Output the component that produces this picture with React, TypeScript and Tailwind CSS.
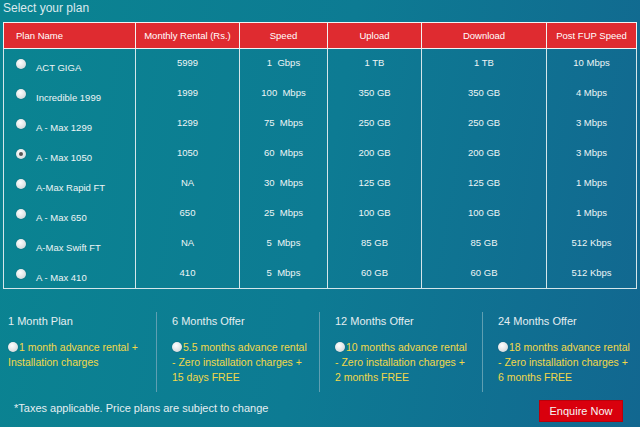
import React from 'react';

const plans = [
  { name: 'ACT GIGA', rent: '5999', speed: '1  Gbps', up: '1 TB', down: '1 TB', fup: '10 Mbps' },
  { name: 'Incredible 1999', rent: '1999', speed: '100  Mbps', up: '350 GB', down: '350 GB', fup: '4 Mbps' },
  { name: 'A - Max 1299', rent: '1299', speed: '75  Mbps', up: '250 GB', down: '250 GB', fup: '3 Mbps' },
  { name: 'A - Max 1050', rent: '1050', speed: '60  Mbps', up: '200 GB', down: '200 GB', fup: '3 Mbps' },
  { name: 'A-Max Rapid FT', rent: 'NA', speed: '30  Mbps', up: '125 GB', down: '125 GB', fup: '1 Mbps' },
  { name: 'A - Max 650', rent: '650', speed: '25  Mbps', up: '100 GB', down: '100 GB', fup: '1 Mbps' },
  { name: 'A-Max Swift FT', rent: 'NA', speed: '5  Mbps', up: '85 GB', down: '85 GB', fup: '512 Kbps' },
  { name: 'A - Max 410', rent: '410', speed: '5  Mbps', up: '60 GB', down: '60 GB', fup: '512 Kbps' },
];

const offers = [
  { title: '1 Month Plan', text: '1 month advance rental + Installation charges' },
  { title: '6 Months Offer', text: '5.5 months advance rental - Zero installation charges + 15 days FREE' },
  { title: '12 Months Offer', text: '10 months advance rental - Zero installation charges + 2 months FREE' },
  { title: '24 Months Offer', text: '18 months advance rental - Zero installation charges + 6 months FREE' },
];

function Radio({ checked }: { checked?: boolean }) {
  return (
    <span className="inline-flex h-[10px] w-[10px] shrink-0 items-center justify-center rounded-full bg-[radial-gradient(circle_at_40%_35%,#ffffff,#c9cfd2)] shadow-[0_0_1px_rgba(0,0,0,0.4)]">
      {checked && <span className="h-[4px] w-[4px] rounded-full bg-[#555]" />}
    </span>
  );
}

export default function App() {
  const [selected, setSelected] = React.useState(3);

  return (
    <div className="h-[427px] w-[640px] overflow-hidden bg-[linear-gradient(100deg,#0a8491_0%,#0d7b93_50%,#126790_100%)] font-['Liberation_Sans',sans-serif] text-[#eef5f6]">
      <div className="px-[3px] text-[12px] leading-[16px] text-[#dbeaee]">Select your plan</div>

      <table className="ml-[3px] mt-[6px] w-[633px] table-fixed border-collapse border border-[#d5e6ea] text-[9.5px] leading-[11px]">
        <colgroup>
          <col className="w-[132px]" />
          <col className="w-[104px]" />
          <col className="w-[88px]" />
          <col className="w-[94px]" />
          <col className="w-[125px]" />
          <col className="w-[90px]" />
        </colgroup>
        <thead>
          <tr className="h-[26px] bg-[#df2b30] text-white">
            <th className="border border-[#f2f2f2] pl-[12px] text-left font-normal">Plan Name</th>
            <th className="border border-[#f2f2f2] font-normal">Monthly Rental (Rs.)</th>
            <th className="border border-[#f2f2f2] font-normal">Speed</th>
            <th className="border border-[#f2f2f2] font-normal">Upload</th>
            <th className="border border-[#f2f2f2] font-normal">Download</th>
            <th className="border border-[#f2f2f2] font-normal">Post FUP Speed</th>
          </tr>
        </thead>
        <tbody>
          {plans.map((p, i) => (
            <tr key={p.name} className="h-[30px]">
              <td className="h-[30px] border-x border-[#d5e6ea] p-0 pl-[12px] align-top">
                <label className="flex cursor-pointer items-start gap-[10px] pt-[10px]" onClick={() => setSelected(i)}>
                  <Radio checked={selected === i} />
                  <span className="mt-[3px]">{p.name}</span>
                </label>
              </td>
              <td className="border-x border-[#d5e6ea] p-0 pt-[8px] text-center align-top">{p.rent}</td>
              <td className="whitespace-pre border-x border-[#d5e6ea] p-0 pt-[8px] text-center align-top">{p.speed}</td>
              <td className="border-x border-[#d5e6ea] p-0 pt-[8px] text-center align-top">{p.up}</td>
              <td className="border-x border-[#d5e6ea] p-0 pt-[8px] text-center align-top">{p.down}</td>
              <td className="border-x border-[#d5e6ea] p-0 pt-[8px] text-center align-top">{p.fup}</td>
            </tr>
          ))}
        </tbody>
      </table>

      <div className="mt-[23px] grid grid-cols-[156px_163px_163px_158px]">
        {offers.map((o, i) => (
          <div
            key={o.title}
            className={
              i === 0
                ? 'h-[80px] pl-[8px]'
                : 'h-[80px] border-l border-[#5f9fb2] pl-[15px]'
            }
          >
            <div className="pt-[2px] text-[11px] leading-[14px] text-[#e4eef1]">{o.title}</div>
            <div className="mt-[12px] max-w-[136px] text-[10.5px] leading-[15px] text-[#f2d84a]">
              <span className="mr-[1px] inline-block translate-y-[1px]">
                <Radio />
              </span>
              {o.text}
            </div>
          </div>
        ))}
      </div>

      <div className="mt-[6px] flex items-start justify-between pl-[14px] pr-[17px]">
        <span className="pt-[4px] text-[11px] leading-[13px] text-[#e4eef1]">
          *Taxes applicable. Price plans are subject to change
        </span>
        <button className="mt-[2px] h-[22px] w-[84px] border border-[#b9000a] bg-[#d9000d] text-[11px] text-[#f6f6f6]">
          Enquire Now
        </button>
      </div>
    </div>
  );
}
